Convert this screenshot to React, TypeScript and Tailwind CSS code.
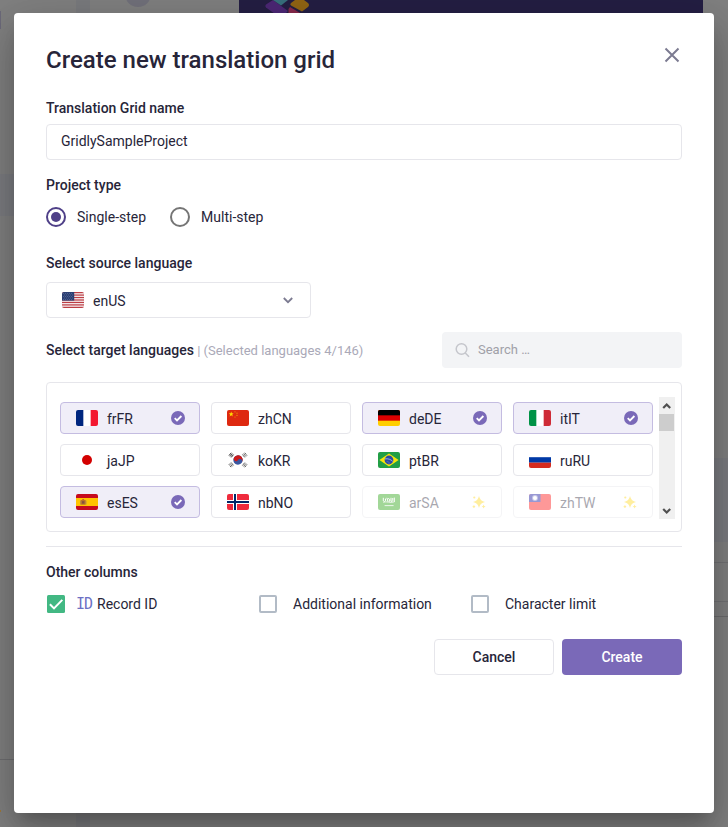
import React from "react";

type Code = "us" | "fr" | "cn" | "de" | "it" | "jp" | "kr" | "br" | "ru" | "es" | "no" | "sa" | "tw";

const flags: Record<Code, React.ReactNode> = {
  us: (
    <>
      <rect width="22" height="16" fill="#f7f3f5" />
      {[0, 2.46, 4.92, 7.38, 9.84, 12.3, 14.77].map((y) => (
        <rect key={y} y={y} width="22" height="1.23" fill="#bd3d44" />
      ))}
      <rect width="12.2" height="8.6" fill="#2b3f73" />
      {[1.2, 2.7, 4.2, 5.7, 7.2].map((y, r) =>
        [1, 3, 5, 7, 9].map((x) => (
          <rect key={`${x}-${y}`} x={x + (r % 2)} y={y} width="0.8" height="0.6" fill="#7485ae" />
        )),
      )}
    </>
  ),
  fr: (
    <>
      <rect width="22" height="16" fill="#fff" />
      <rect width="7.33" height="16" fill="#00267f" />
      <rect x="14.67" width="7.33" height="16" fill="#f31830" />
    </>
  ),
  cn: (
    <>
      <rect width="22" height="16" fill="#de2910" />
      <path d="M4.200 1.600l.65 1.750 1.850.08-1.450 1.150.5 1.800-1.550-1.020-1.550 1.020.5-1.800L1.700 3.430l1.850-.08z" fill="#ffde00" />
      <g fill="#f09a0a">
        <circle cx="8" cy="1.800" r="0.6" />
        <circle cx="10" cy="3.200" r="0.6" />
        <circle cx="10" cy="5.400" r="0.6" />
        <circle cx="8" cy="7" r="0.6" />
      </g>
    </>
  ),
  de: (
    <>
      <rect width="22" height="16" fill="#ffce00" />
      <rect width="22" height="10.67" fill="#d00" />
      <rect width="22" height="5.33" fill="#000" />
    </>
  ),
  it: (
    <>
      <rect width="22" height="16" fill="#fff" />
      <rect width="7.33" height="16" fill="#009246" />
      <rect x="14.67" width="7.33" height="16" fill="#ce2b37" />
    </>
  ),
  jp: (
    <>
      <rect width="22" height="16" fill="#fff" />
      <circle cx="11" cy="8" r="5" fill="#d30000" />
    </>
  ),
  kr: (
    <>
      <rect width="22" height="16" fill="#fff" />
      <g transform="rotate(33 11 8)">
        <circle cx="11" cy="8" r="4.700" fill="#3a57a0" />
        <path d="M6.300 8a4.700 4.700 0 0 1 9.400 0 2.350 2.350 0 0 0-4.700 0 2.350 2.350 0 0 1-4.700 0z" fill="#cc1a1a" />
      </g>
      <g stroke="#111" strokeWidth="0.9">
        <path d="M2 3.600L4.300 .8M3.100 4.500L5.400 1.700M4.200 5.400L6.500 2.600" />
        <g strokeDasharray="1.400 0.700">
          <path d="M17.700 .8L20 3.600M16.600 1.700l2.300 2.800M15.500 2.600l2.300 2.800" />
          <path d="M2 12.400l2.300 2.800M3.100 11.500l2.300 2.800M4.200 10.600l2.300 2.800" />
          <path d="M17.700 15.200l2.300-2.800M16.600 14.300l2.300-2.800M15.500 13.400l2.300-2.800" />
        </g>
      </g>
    </>
  ),
  br: (
    <>
      <rect width="22" height="16" fill="#229e45" />
      <path d="M11 1.600L20.600 8 11 14.400 1.400 8z" fill="#f8e509" />
      <circle cx="11" cy="8" r="4.400" fill="#2b49a3" />
      <path d="M7 6.900c3-.5 5.800.4 7.700 2.500" stroke="#b9c7df" strokeWidth="0.8" fill="none" />
      <path d="M8.500 9.700h2M10 11h2" stroke="#6f86c0" strokeWidth="0.6" />
    </>
  ),
  ru: (
    <>
      <rect width="22" height="16" fill="#fff" />
      <rect y="5.2" width="22" height="5.5" fill="#0039a6" />
      <rect y="10.67" width="22" height="5.33" fill="#d52b1e" />
    </>
  ),
  es: (
    <>
      <rect width="22" height="16" fill="#c60b1e" />
      <rect y="4" width="22" height="8" fill="#ffc400" />
      <rect x="4.6" y="6" width="5.2" height="4.8" rx="0.8" fill="#b9722a" />
      <rect x="6.3" y="5" width="1.8" height="1.2" fill="#c8622a" />
      <rect x="6" y="7.2" width="2.4" height="2.4" fill="#83503f" />
      <rect x="4" y="6.6" width="0.8" height="4" fill="#b08a4b" />
      <rect x="9.6" y="6.6" width="0.8" height="4" fill="#b08a4b" />
    </>
  ),
  no: (
    <>
      <rect width="22" height="16" fill="#ef2b3d" />
      <path d="M8 0v16M0 8h22" stroke="#fff" strokeWidth="4" />
      <path d="M8 0v16M0 8h22" stroke="#002868" strokeWidth="2" />
    </>
  ),
  sa: (
    <>
      <rect width="22" height="16" fill="#199d00" />
      <g stroke="#fff" fill="none" strokeLinecap="round">
        <path d="M5.300 4.200v2.600q1.200 1.400 2.200 0V5M9 4.200l1 3.300M10.600 4.400q1.600 0 1.200 3M13 4.200v3q1.500.8 1.800-.8V4.400M16.300 4v3.600" strokeWidth="1" />
        <path d="M5.500 8.200q2.500-.8 5 0t5.500-.2" strokeWidth="0.7" />
        <path d="M7 11.600h8.200" strokeWidth="0.8" />
      </g>
    </>
  ),
  tw: (
    <>
      <rect width="22" height="16" fill="#fe0000" />
      <rect width="11.5" height="8" fill="#000095" />
      <circle cx="6" cy="4" r="2.9" fill="#fff" opacity="0.5" />
      <circle cx="6" cy="4" r="2" fill="#fff" />
    </>
  ),
};

function Flag({ code }: { code: Code }) {
  return (
    <svg viewBox="0 0 22 16" className="h-4 w-[22px] shrink-0 overflow-hidden rounded-[2px]">
      {flags[code]}
    </svg>
  );
}

function SelectedBadge() {
  return (
    <svg viewBox="0 0 14 14" className="h-3.5 w-3.5">
      <circle cx="7" cy="7" r="7" fill="#7a69b8" />
      <path d="M3.700 7.200l2.300 2.300 4.400-4.500" fill="none" stroke="#fff" strokeWidth="1.800" />
    </svg>
  );
}

function Sparkles() {
  return (
    <svg viewBox="0 0 14 14" className="mr-px h-3.5 w-3.5" fill="#ffd60f">
      <path d="M7 1Q7.900 5.900 13 7 7.900 8.100 7 13 6.100 8.100 1 7 6.100 5.900 7 1z" />
      <path d="M7 2.500L8.300 5.700 11.500 7 8.300 8.300 7 11.500 5.700 8.300 2.500 7 5.700 5.700z" />
      <circle cx="2.300" cy="2.500" r="1.100" />
      <circle cx="1.900" cy="11.600" r="1.200" />
      <path d="M11.600 9.600l.6 1.400 1.400.6-1.400.6-.6 1.400-.6-1.400-1.400-.6 1.400-.6z" />
    </svg>
  );
}

interface Language {
  code: Code;
  label: string;
  selected?: boolean;
  premium?: boolean;
}

const languages: Language[] = [
  { code: "fr", label: "frFR", selected: true },
  { code: "cn", label: "zhCN" },
  { code: "de", label: "deDE", selected: true },
  { code: "it", label: "itIT", selected: true },
  { code: "jp", label: "jaJP" },
  { code: "kr", label: "koKR" },
  { code: "br", label: "ptBR" },
  { code: "ru", label: "ruRU" },
  { code: "es", label: "esES", selected: true },
  { code: "no", label: "nbNO" },
  { code: "sa", label: "arSA", premium: true },
  { code: "tw", label: "zhTW", premium: true },
];

function LanguageChip({ lang }: { lang: Language }) {
  const tone = lang.selected
    ? "border-[#c4bce1] bg-[#f0eef8]"
    : lang.premium
      ? "border-[#e6e6eb] bg-white opacity-40"
      : "border-[#e6e6eb] bg-white";
  return (
    <div className={`flex h-8 items-center rounded border pr-[14px] pl-[15px] ${tone}`}>
      <Flag code={lang.code} />
      <span className="ml-[9px] flex-1 pt-0.5">{lang.label}</span>
      {lang.selected && <SelectedBadge />}
      {lang.premium && <Sparkles />}
    </div>
  );
}

function Backdrop() {
  return (
    <div className="flex h-full bg-[#808080]">
      <div className="flex w-[76px] flex-col">
        <div className="mt-[11px] h-[18px] w-px bg-[#6c6a7a]" />
        <div className="mt-[145px] h-[42px] bg-[#7b7c80]" />
        <div className="mt-[543px] h-px bg-[#6e6e70]" />
        <div className="mt-[50px] h-0.5 w-px bg-[#a07a3a]" />
      </div>
      <div className="w-3.5 bg-[#7a7b7e]" />
      <div className="w-[149px] overflow-hidden pl-[35px]">
        <div className="-mt-[19px] h-[26px] w-[26px] rounded-full bg-[#72717b]" />
      </div>
      <div className="h-[120px] w-[464px] bg-[#251f44]">
        <svg viewBox="0 0 48 14" className="ml-[25px] h-3.5 w-12">
          <path d="M9 0L2 4.500Q.5 6 2 7.500L11 14H21L24 11Z" fill="#4d2876" />
          <path d="M9 0H24L17 5.500Z" fill="#39717e" />
          <path d="M26 7L37 13.500H24.500V9Z" fill="#892a4d" />
          <path d="M31 0H40L44 3Q46 5 44 7L38 11.500 27 5.500Q25.500 4 27 3Z" fill="#926514" />
        </svg>
      </div>
      <div className="flex flex-1 flex-col">
        <div className="mt-[458px] h-[84px] bg-[#7b7c80]" />
        <div className="mt-[20px] h-px bg-[#727274]" />
        <div className="mt-[38px] h-px bg-[#727274]" />
        <div className="mt-[14px] h-px bg-[#6c6c6e]" />
      </div>
    </div>
  );
}

function Radio({ label, checked }: { label: string; checked?: boolean }) {
  return (
    <div className="flex items-center gap-[11px]">
      <span
        className={`flex h-5 w-5 items-center justify-center rounded-full border-2 ${checked ? "border-[#4f4088]" : "border-[#757575]"}`}
      >
        {checked && <span className="h-2.5 w-2.5 rounded-full bg-[#4f4088]" />}
      </span>
      <span>{label}</span>
    </div>
  );
}

function Check({ checked, children }: { checked?: boolean; children: React.ReactNode }) {
  return (
    <div className="flex items-center pl-px">
      {checked ? (
        <svg viewBox="0 0 18 18" className="h-[18px] w-[18px]">
          <rect width="18" height="18" rx="1.5" fill="#42b883" />
          <path d="M2.900 9.300l4.100 4.100 8.300-8.500" fill="none" stroke="#fff" strokeWidth="2" />
        </svg>
      ) : (
        <span className="h-[18px] w-[18px] rounded-[2px] border-2 border-[#b2bbc6]" />
      )}
      {children}
    </div>
  );
}

export default function App() {
  return (
    <div className="relative h-[827px] w-[728px] overflow-hidden font-['Roboto',sans-serif] text-sm leading-5 text-[#272539]">
      <Backdrop />
      <div
        role="dialog"
        className="absolute top-[13px] left-3.5 flex h-[800px] w-[700px] flex-col rounded bg-white px-8 shadow-[0_11px_15px_-7px_rgba(0,0,0,0.2),0_24px_38px_3px_rgba(0,0,0,0.14),0_9px_46px_8px_rgba(0,0,0,0.12)]"
      >
        <header className="mt-[31px] flex h-8 items-center justify-between">
          <h1 className="text-2xl font-medium">Create new translation grid</h1>
          <svg viewBox="0 0 20 20" className="-mt-2.5 h-5 w-5" stroke="#7c7b91" strokeWidth="2" fill="none">
            <path d="M3.500 3.500l13 13M16.500 3.500l-13 13" />
          </svg>
        </header>

        <label className="mt-[22px] font-medium">Translation Grid name</label>
        <div className="mt-1.5 flex h-9 items-center rounded border border-[#e6e6eb] px-3.5 pb-0.5">GridlySampleProject</div>

        <h2 className="mt-[15px] font-medium">Project type</h2>
        <div className="mt-3 flex gap-6">
          <Radio label="Single-step" checked />
          <Radio label="Multi-step" />
        </div>

        <h2 className="mt-[26px] font-medium">Select source language</h2>
        <div className="mt-[9px] flex h-9 w-[265px] items-center rounded border border-[#e6e6eb] pr-[15px] pl-[15px]">
          <Flag code="us" />
          <span className="ml-[9px] flex-1 pt-0.5">enUS</span>
          <svg viewBox="0 0 14 14" className="h-3.5 w-3.5" fill="none" stroke="#7c7b91" strokeWidth="1.800">
            <path d="M2.800 5L7 9.200 11.200 5" />
          </svg>
        </div>

        <div className="mt-3.5 flex h-9 items-center justify-between">
          <h2 className="font-medium">
            Select target languages
            <span className="text-[13px] font-normal text-[#aaa9b8]"> | (Selected languages 4/146)</span>
          </h2>
          <div className="flex h-9 w-60 items-center rounded bg-[#f3f4f6] pl-3 text-[13px] text-[#a0a0a8]">
            <svg viewBox="0 0 16 16" className="mr-2 h-4 w-4" fill="none" stroke="#c5c6cc" strokeWidth="1.500">
              <circle cx="7.500" cy="7" r="5.300" />
              <path d="M11.300 10.900l3.700 3.900" />
            </svg>
            Search …
          </div>
        </div>

        <section className="mt-3.5 flex h-[150px] rounded border border-[#e6e6eb] pt-3.5 pr-1.5 pl-[13px]">
          <div className="grid h-[122px] flex-1 grid-cols-4 content-start gap-x-[11px] gap-y-2.5 pt-[5px]">
            {languages.map((lang) => (
              <LanguageChip key={lang.label} lang={lang} />
            ))}
          </div>
          <div className="ml-1.5 flex h-[122px] w-4 flex-col justify-between bg-[#f0f0f0]">
            <div>
              <svg viewBox="0 0 16 17" className="h-[17px] w-4" fill="none" stroke="#505050" strokeWidth="2.200">
                <path d="M4.200 11l3.500-3.500L11.200 11" />
              </svg>
              <div className="h-[17px] w-[15px] bg-[#cdcdcd]" />
            </div>
            <svg viewBox="0 0 16 17" className="h-[17px] w-4" fill="none" stroke="#505050" strokeWidth="2.200">
              <path d="M4.200 7l3.500 3.500L11.200 7" />
            </svg>
          </div>
        </section>

        <hr className="mt-3.5 border-[#e6e6eb]" />

        <h2 className="mt-[15px] font-medium">Other columns</h2>
        <div className="mt-3 grid h-5 grid-cols-3">
          <Check checked>
            <span className="ml-[11px] w-[21px] font-['DejaVu_Sans_Mono',monospace] text-[15px] tracking-[-1px] text-[#6c70c4]">ID</span>
            <span>Record ID</span>
          </Check>
          <Check>
            <span className="ml-4">Additional information</span>
          </Check>
          <Check>
            <span className="ml-4">Character limit</span>
          </Check>
        </div>

        <footer className="mt-[25px] flex justify-end gap-2 font-medium">
          <button className="h-9 w-[120px] rounded border border-[#e6e6eb]">Cancel</button>
          <button className="h-9 w-[120px] rounded bg-[#7a69b8] text-white">Create</button>
        </footer>
      </div>
    </div>
  );
}
